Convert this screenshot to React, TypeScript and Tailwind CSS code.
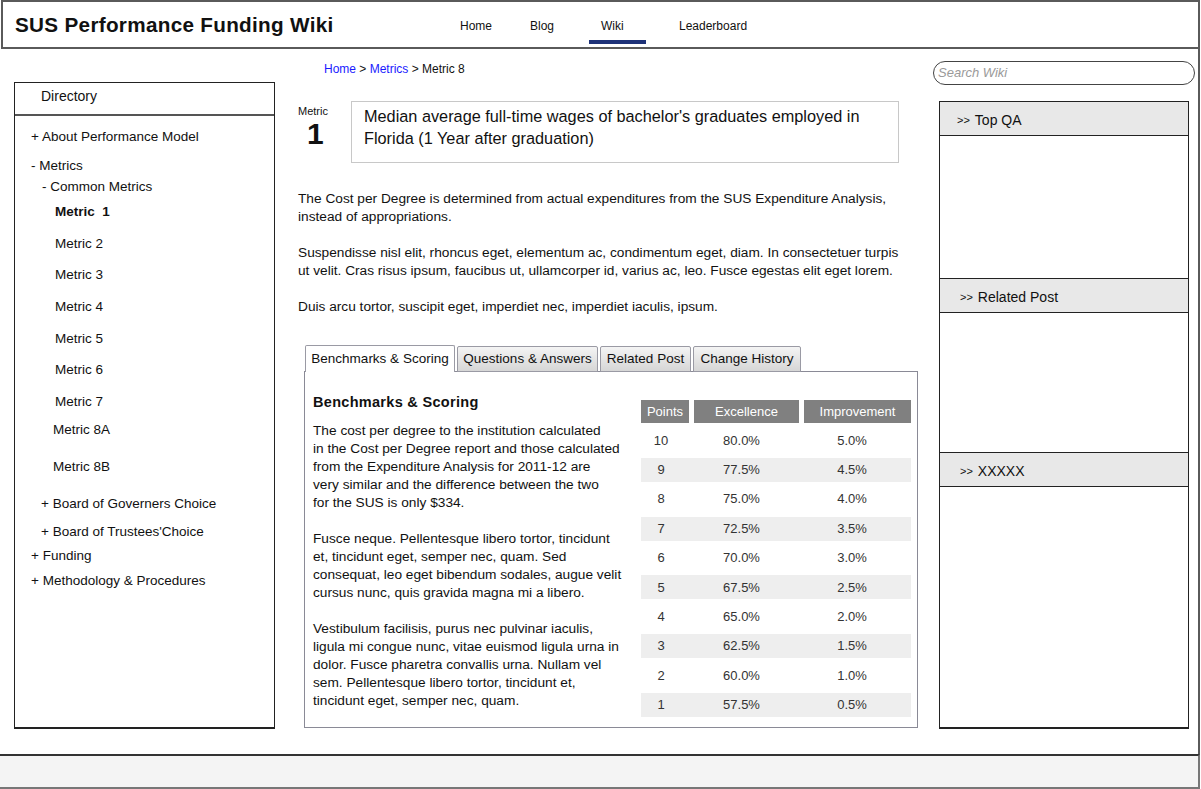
import React from 'react';

const dirItems = [
  { label: '+ About Performance Model', cls: 'h-[29px] pl-[16px]' },
  { label: '- Metrics', cls: 'h-[21px] pl-[16px]' },
  { label: '- Common Metrics', cls: 'h-[25px] pl-[27px]' },
  { label: 'Metric  1', cls: 'h-[32px] pl-[40px] font-bold whitespace-pre' },
  { label: 'Metric 2', cls: 'h-[31px] pl-[40px]' },
  { label: 'Metric 3', cls: 'h-[32px] pl-[40px]' },
  { label: 'Metric 4', cls: 'h-[32px] pl-[40px]' },
  { label: 'Metric 5', cls: 'h-[31px] pl-[40px]' },
  { label: 'Metric 6', cls: 'h-[32px] pl-[40px]' },
  { label: 'Metric 7', cls: 'h-[28px] pl-[40px]' },
  { label: 'Metric 8A', cls: 'h-[37px] pl-[38px]' },
  { label: 'Metric 8B', cls: 'h-[37px] pl-[38px]' },
  { label: '+ Board of Governers Choice', cls: 'h-[28px] pl-[26px]' },
  { label: "+ Board of Trustees'Choice", cls: 'h-[24px] pl-[26px]' },
  { label: '+ Funding', cls: 'h-[25px] pl-[16px]' },
  { label: '+ Methodology & Procedures', cls: 'h-[18px] pl-[16px]' },
];

const scores = [
  ['10', '80.0%', '5.0%'],
  ['9', '77.5%', '4.5%'],
  ['8', '75.0%', '4.0%'],
  ['7', '72.5%', '3.5%'],
  ['6', '70.0%', '3.0%'],
  ['5', '67.5%', '2.5%'],
  ['4', '65.0%', '2.0%'],
  ['3', '62.5%', '1.5%'],
  ['2', '60.0%', '1.0%'],
  ['1', '57.5%', '0.5%'],
];

const tabs = [
  { label: 'Benchmarks & Scoring', w: 'w-[150px]', active: true },
  { label: 'Questions & Answers', w: 'w-[141px]', active: false },
  { label: 'Related Post', w: 'w-[91px]', active: false },
  { label: 'Change History', w: 'w-[108px]', active: false },
];

// first paragraph is broken exactly as in the mockup
const costLines = [
  'The cost per degree to the institution calculated',
  'in the Cost per Degree report and those calculated',
  'from the Expenditure Analysis for 2011-12 are',
  'very similar and the difference between the two',
  'for the SUS is only $334.',
];

const SideSection: React.FC<{ title: string; body: string; pl: string }> = ({ title, body, pl }) => (
  <>
    <div className={`h-[35px] shrink-0 bg-[#e8e8e8] border-y border-[#222] flex items-center pt-[3px] text-[14px] ${pl}`}>
      <span className="text-[11px] mr-[5px]">&gt;&gt;</span>
      {title}
    </div>
    <div className={body} />
  </>
);

export default function App() {
  return (
    <div className="w-[1201px] h-[789px] bg-white text-[#111] overflow-hidden flex flex-col" style={{ fontFamily: '"Comic Sans MS", "Liberation Sans", Arial, sans-serif' }}>
      {/* header */}
      <header className="h-[49px] shrink-0 border-2 border-[#5a5a5a] mx-[1px] flex items-center relative">
        <h1 className="ml-[12px] text-[20.7px] font-bold tracking-[0.3px]">SUS Performance Funding Wiki</h1>
        <nav className="absolute left-[457px] top-0 h-full flex text-[12px]">
          <a className="mt-[15px] w-[70px]">Home</a>
          <a className="mt-[15px] w-[59px]">Blog</a>
          <div className="flex flex-col w-[58px]">
            <a className="mt-[15px] ml-[12px]">Wiki</a>
            <span className="mt-[5px] h-[4px] w-[57px] bg-[#1e3278]" />
          </div>
          <a className="mt-[15px] ml-[32px]">Leaderboard</a>
        </nav>
      </header>

      {/* body */}
      <div className="flex-1 flex border-r-2 border-[#5a5a5a] mr-[1px]">
        {/* directory */}
        <aside className="ml-[14px] mt-[33px] w-[261px] h-[647px] border border-[#222] border-b-2 flex flex-col">
          <div className="h-[33px] border-b-2 border-[#555] pl-[26px] pt-[3px] text-[14px]">Directory</div>
          <ul className="pt-[12px] text-[13.5px] leading-[18px]">
            {dirItems.map((it) => (
              <li key={it.label} className={it.cls}>{it.label}</li>
            ))}
          </ul>
        </aside>

        {/* main */}
        <main className="ml-[23px] w-[620px] flex flex-col">
          <div className="ml-[26px] mt-[13px] text-[12px] leading-[14px]">
            <span className="text-[#1a1aff]">Home</span> &gt; <span className="text-[#1a1aff]">Metrics</span> &gt; Metric 8
          </div>

          <div className="mt-[25px] flex">
            <div className="w-[53px] flex flex-col">
              <span className="text-[11px] leading-[14px] mt-[3px]">Metric</span>
              <span className="text-[30px] font-bold leading-[32px] ml-[9px]">1</span>
            </div>
            <div className="w-[548px] h-[62px] border border-[#c8c8c8] pl-[12px] pt-[3px] text-[16.3px] leading-[22px]">
              Median average full-time wages of bachelor's graduates employed in Florida (1 Year after graduation)
            </div>
          </div>

          <div className="mt-[27px] text-[13.7px] leading-[18px] w-[608px]">
            <p className="mb-[18px]">The Cost per Degree is determined from actual expenditures from the SUS Expenditure Analysis, instead of appropriations.</p>
            <p className="mb-[18px]">Suspendisse nisl elit, rhoncus eget, elementum ac, condimentum eget, diam. In consectetuer turpis ut velit. Cras risus ipsum, faucibus ut, ullamcorper id, varius ac, leo. Fusce egestas elit eget lorem.</p>
            <p>Duis arcu tortor, suscipit eget, imperdiet nec, imperdiet iaculis, ipsum.</p>
          </div>

          {/* tabs */}
          <div className="mt-[29px] ml-[7px] flex gap-[2px] items-end relative z-10">
            {tabs.map((t) => (
              <div
                key={t.label}
                className={
                  t.active
                    ? `${t.w} h-[27px] bg-white border border-b-0 border-[#9a9aa4] rounded-t-[2px] flex items-center justify-center text-[13.5px]`
                    : `${t.w} h-[26px] bg-gradient-to-b from-[#f4f4f4] to-[#d6d6d6] border border-[#9a9aa4] rounded-t-[2px] flex items-center justify-center text-[13.5px]`
                }
              >
                {t.label}
              </div>
            ))}
          </div>
          <div className="ml-[6px] -mt-[1px] w-[614px] h-[357px] border border-[#8a8a96] flex">
            <div className="w-[320px] pl-[8px] pt-[21px]">
              <h3 className="text-[14.5px] font-bold leading-[18px] tracking-[0.3px]">Benchmarks &amp; Scoring</h3>
              <div className="mt-[11px] text-[13.7px] leading-[18px] w-[312px]">
                <p className="mb-[18px]">
                  {costLines.map((l) => (
                    <span key={l} className="block whitespace-nowrap">{l}</span>
                  ))}
                </p>
                <p className="mb-[18px]">Fusce neque. Pellentesque libero tortor, tincidunt et, tincidunt eget, semper nec, quam. Sed consequat, leo eget bibendum sodales, augue velit cursus nunc, quis gravida magna mi a libero.</p>
                <p>Vestibulum facilisis, purus nec pulvinar iaculis, ligula mi congue nunc, vitae euismod ligula urna in dolor. Fusce pharetra convallis urna. Nullam vel sem. Pellentesque libero tortor, tincidunt et, tincidunt eget, semper nec, quam.</p>
              </div>
            </div>
            <div className="ml-[16px] mt-[28px] w-[270px] text-[13px] text-[#333]">
              <div className="flex gap-[5px] h-[23px] text-white text-[13px]">
                <div className="w-[48px] bg-[#808080] flex items-center justify-center">Points</div>
                <div className="w-[105px] bg-[#808080] flex items-center justify-center">Excellence</div>
                <div className="w-[107px] bg-[#808080] flex items-center justify-center">Improvement</div>
              </div>
              <div className="flex flex-col">
                {scores.map((r, i) => (
                  <div key={r[0]} className={`mt-[5.4px] h-[24px] flex items-center ${i % 2 === 1 ? 'bg-[#eeeeee]' : ''}`}>
                    <span className="w-[40px] text-center">{r[0]}</span>
                    <span className="w-[121px] text-center">{r[1]}</span>
                    <span className="w-[100px] text-center">{r[2]}</span>
                  </div>
                ))}
              </div>
            </div>
          </div>
        </main>

        {/* right column */}
        <div className="ml-[15px] w-[263px] flex flex-col">
          <div className="mt-[12px] h-[24px] w-[262px] border-[1.5px] border-[#444] rounded-full flex items-center pl-[4px] text-[13px] italic text-[#9a9a9a]">
            Search Wiki
          </div>
          <div className="mt-[16px] ml-[6px] w-[250px] h-[628px] border-x border-b-2 border-[#222] flex flex-col">
            <SideSection title="Top QA" body="h-[142px]" pl="pl-[17px]" />
            <SideSection title="Related Post" body="h-[139px]" pl="pl-[20px]" />
            <SideSection title="XXXXX" body="flex-1" pl="pl-[20px]" />
          </div>
        </div>
      </div>

      {/* footer */}
      <footer className="h-[35px] shrink-0 bg-[#f4f4f4] border-t-2 border-[#333] border-b-2 border-b-[#777] border-r-2 border-r-[#777] mr-[1px]" />
    </div>
  );
}
